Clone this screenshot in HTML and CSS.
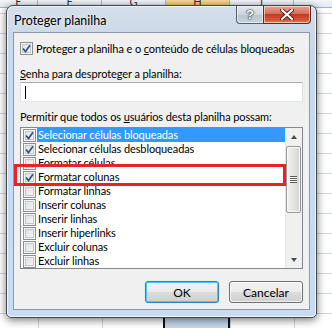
FILE: index.html
```html
<!DOCTYPE html>
<html lang="pt">
<head>
    <meta charset="UTF-8">
    <title>Proteger planilha</title>
    <link rel="stylesheet" href="styles.css">
</head>
<body>
    <!-- planilha ao fundo -->
    <div class="sheet">
        <div class="col-heads">
            <span>E</span><span>F</span><span>G</span><span class="on">H</span><span>I</span>
        </div>
        <div class="col-sel"></div>
    </div>

    <div class="window">
        <div class="titlebar">
            <span class="title">Proteger planilha</span>
            <div class="caption-btns">
                <div class="cap help">?</div>
                <div class="cap close">
                    <svg width="14" height="11" viewBox="0 0 14 11">
                        <path d="M2 1 L12 10 M12 1 L2 10" stroke="#5a2216" stroke-width="4" stroke-linecap="round"/>
                        <path d="M2 1 L12 10 M12 1 L2 10" stroke="#ffffff" stroke-width="2" stroke-linecap="round"/>
                    </svg>
                </div>
            </div>
        </div>

        <div class="client">
            <div class="check-row">
                <span class="cb checked">
                    <svg width="9" height="9" viewBox="0 0 9 9"><path d="M1 4.5 L3.5 7.5 L8 1.2" fill="none" stroke="#34508e" stroke-width="1.7"/></svg>
                </span>
                <span>Proteger a planilha e o <u>c</u>onteúdo de células bloqueadas</span>
            </div>

            <div class="label pw-label"><u>S</u>enha para desproteger a planilha:</div>
            <div class="textbox"><span class="caret"></span></div>

            <div class="label list-label">Permitir que todos os <u>u</u>suários desta planilha possam:</div>
            <div class="listbox">
                <div class="items">
                    <div class="item selected">
                        <span class="cb checked"><svg width="9" height="9" viewBox="0 0 9 9"><path d="M1 4.5 L3.5 7.5 L8 1.2" fill="none" stroke="#34508e" stroke-width="1.7"/></svg></span>
                        <span class="text">Selecionar células bloqueadas</span>
                    </div>
                    <div class="item">
                        <span class="cb checked"><svg width="9" height="9" viewBox="0 0 9 9"><path d="M1 4.5 L3.5 7.5 L8 1.2" fill="none" stroke="#34508e" stroke-width="1.7"/></svg></span>
                        <span class="text">Selecionar células desbloqueadas</span>
                    </div>
                    <div class="item">
                        <span class="cb"></span>
                        <span class="text">Formatar células</span>
                    </div>
                    <div class="item">
                        <span class="cb checked"><svg width="9" height="9" viewBox="0 0 9 9"><path d="M1 4.5 L3.5 7.5 L8 1.2" fill="none" stroke="#34508e" stroke-width="1.7"/></svg></span>
                        <span class="text">Formatar colunas</span>
                    </div>
                    <div class="item"><span class="cb"></span><span class="text">Formatar linhas</span></div>
                    <div class="item"><span class="cb"></span><span class="text">Inserir colunas</span></div>
                    <div class="item"><span class="cb"></span><span class="text">Inserir linhas</span></div>
                    <div class="item"><span class="cb"></span><span class="text">Inserir hiperlinks</span></div>
                    <div class="item"><span class="cb"></span><span class="text">Excluir colunas</span></div>
                    <div class="item"><span class="cb"></span><span class="text">Excluir linhas</span></div>
                </div>
                <div class="scrollbar">
                    <div class="arrow up"></div>
                    <div class="track">
                        <div class="thumb"><span class="grip"></span></div>
                    </div>
                    <div class="arrow down"></div>
                </div>
            </div>

            <div class="buttons">
                <button class="btn default">OK</button>
                <button class="btn">Cancelar</button>
            </div>
        </div>
    </div>

    <!-- destaque vermelho -->
    <div class="highlight-box"></div>
</body>
</html>
```

FILE: styles.css
```css
body {
    margin: 0;
    width: 332px;
    height: 328px;
    overflow: hidden;
    position: relative;
    font-family: Lato, "Liberation Sans", Arial, sans-serif;
    font-size: 11px;
    letter-spacing: -0.1px;
    color: #000;
    background-color: #ffffff;
    background-image:
        repeating-linear-gradient(90deg, transparent 0 37px, #d0d7e5 37px 38px, transparent 38px 64px),
        repeating-linear-gradient(180deg, transparent 0 13px, #d0d7e5 13px 14px, transparent 14px 20px);
    background-position: 1px 0, 0 0;
}
.sheet {
    position: absolute;
    inset: 0;
}
.col-heads {
    display: flex;
    height: 7px;
    overflow: hidden;
    background: linear-gradient(#f3f6fa, #e3e9f1);
    border-bottom: 1px solid #9eb6ce;
}
.col-heads span {
    width: 63px;
    flex: none;
    border-right: 1px solid #9eb6ce;
    text-align: center;
    line-height: 4px;
    font-size: 11px;
    color: #333;
}
.col-heads span:first-child {
    width: 37px;
}
.col-heads span.on {
    background: linear-gradient(#f9d99f, #f1c15f);
}
.col-sel {
    position: absolute;
    left: 163px;
    width: 63px;
    top: 8px;
    bottom: 0;
    background: #c5d7ee;
    border-left: 2px solid #111;
    border-right: 2px solid #111;
}

/* janela */
.window {
    position: absolute;
    left: 6px;
    top: 5px;
    width: 311px;
    height: 313px;
    box-sizing: border-box;
    border: 1px solid #40464f;
    border-radius: 7px 7px 5px 5px;
    background: linear-gradient(180deg, #d5dfeb 0, #cdd9e7 26px, #c5d9f0 60px, #c7dcf3 100%);
    box-shadow: 0 2px 9px rgba(0, 0, 0, 0.55), inset 0 0 0 1px rgba(255, 255, 255, 0.75);
    padding: 0 6px 7px 6px;
}
.titlebar {
    position: relative;
    height: 26px;
}
.title {
    position: absolute;
    left: 1px;
    top: 7px;
    font-size: 12.5px;
    letter-spacing: 0;
    color: #000;
    text-shadow: 0 0 6px rgba(255, 255, 255, 0.9);
}
.caption-btns {
    position: absolute;
    right: -1px;
    top: 0;
    display: flex;
}
.cap {
    height: 18px;
    box-sizing: border-box;
    border: 1px solid #55606e;
    border-top: none;
    display: flex;
    align-items: center;
    justify-content: center;
    box-shadow: inset 0 0 0 1px rgba(255, 255, 255, 0.55);
}
.cap.help {
    width: 27px;
    border-right: none;
    border-radius: 0 0 0 4px;
    background: linear-gradient(#e3e8ef, #cdd6e2 50%, #b9c4d3 51%, #c8d2de);
    color: #fff;
    font-family: "Liberation Sans", Arial, sans-serif;
    font-weight: bold;
    font-size: 13px;
    text-shadow: 0 0 1px #333, 0 0 1px #333, 0 0 2px #333;
}
.cap.close {
    width: 48px;
    border-radius: 0 0 4px 0;
    background: linear-gradient(#e8a493, #d4705a 45%, #c4391f 50%, #d35a3c 85%, #e2896b);
    border-color: #5c2a22;
}

.client {
    height: 278px;
    box-sizing: border-box;
    border: 1px solid #8b99aa;
    background: #f0f0f0;
    padding: 8px 6px 0 6px;
}
.check-row {
    display: flex;
    align-items: center;
    height: 14px;
    white-space: nowrap;
}
.check-row .cb {
    margin-right: 3px;
}
.cb {
    flex: none;
    width: 13px;
    height: 13px;
    box-sizing: border-box;
    border: 1px solid #8e8f8f;
    background: linear-gradient(135deg, #dcdcdc, #fbfbfb);
    box-shadow: inset 0 0 0 1px #f4f4f4, inset 0 0 0 2px #c3c8cf;
    display: flex;
    align-items: center;
    justify-content: center;
}
.cb svg {
    display: block;
}
.label {
    height: 14px;
    line-height: 14px;
    white-space: nowrap;
}
.pw-label {
    margin-top: 12px;
}
.textbox {
    margin-top: 1px;
    height: 20px;
    box-sizing: border-box;
    border: 1px solid #abadb3;
    border-color: #abadb3 #dbdfe6 #e3e9ef #e2e3ea;
    background: #fff;
    padding: 3px 4px;
}
.caret {
    display: block;
    width: 1px;
    height: 13px;
    background: #000;
}
.list-label {
    margin-top: 8px;
}
.listbox {
    margin-top: 3px;
    height: 142px;
    box-sizing: border-box;
    border: 1px solid #828790;
    background: #fff;
    display: flex;
}
.items {
    flex: 1;
    overflow: hidden;
}
.item {
    display: flex;
    align-items: center;
    height: 14px;
    white-space: nowrap;
}
.item .cb {
    margin: 0 1px 0 2px;
}
.item .text {
    flex: 1;
    height: 14px;
    line-height: 14px;
    padding-left: 1px;
}
.item.selected .text {
    background: #3399ff;
    color: #fff;
}
.scrollbar {
    width: 17px;
    display: flex;
    flex-direction: column;
    background: #f0f0f0;
    border-left: 1px solid #e6e6e6;
    box-sizing: border-box;
}
.arrow {
    height: 17px;
    display: flex;
    align-items: center;
    justify-content: center;
}
.arrow::after {
    content: "";
    width: 0;
    height: 0;
    border-left: 3.5px solid transparent;
    border-right: 3.5px solid transparent;
}
.arrow.up::after {
    border-bottom: 4px solid #4d4d4d;
}
.arrow.down::after {
    border-top: 4px solid #4d4d4d;
}
.track {
    flex: 1;
    padding-top: 1px;
}
.thumb {
    margin: 0 1px 0 0;
    height: 67px;
    box-sizing: border-box;
    border: 1px solid #989898;
    border-radius: 2px;
    background: linear-gradient(90deg, #f2f2f2, #e4e4e4 50%, #d2d2d2);
    box-shadow: inset 0 0 0 1px rgba(255, 255, 255, 0.8);
    display: flex;
    align-items: center;
    justify-content: center;
}
.grip {
    width: 7px;
    height: 7px;
    background: repeating-linear-gradient(180deg, #585858 0 1px, #ffffff 1px 2px);
}
.buttons {
    display: flex;
    justify-content: flex-end;
    gap: 10px;
    margin-top: 12px;
}
.btn {
    width: 74px;
    height: 22px;
    font-family: inherit;
    font-size: 12px;
    color: #000;
    border: 1px solid #707070;
    border-radius: 3px;
    background: linear-gradient(#f2f2f2 0, #ebebeb 50%, #dddddd 51%, #cfcfcf 100%);
    box-shadow: inset 0 0 0 1px rgba(255, 255, 255, 0.7);
    padding: 0;
}
.btn.default {
    border-color: #3c7fb1;
    box-shadow: inset 0 0 0 1px #48c6f5, 0 0 1px #48c6f5;
}

.highlight-box {
    position: absolute;
    left: 14px;
    top: 164px;
    width: 272px;
    height: 22px;
    box-sizing: border-box;
    border: 3px solid #e8222a;
}
```
